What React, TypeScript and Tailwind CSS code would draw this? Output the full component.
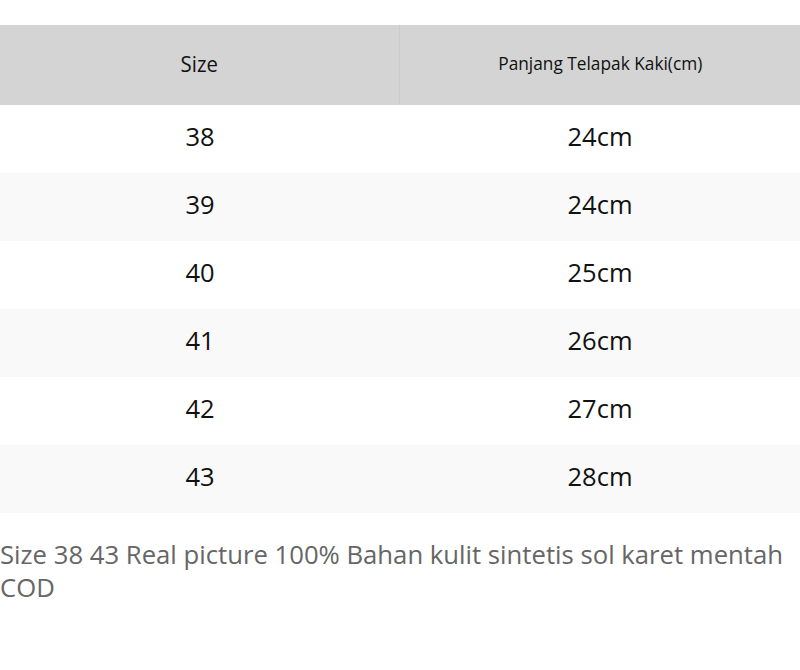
import React from "react"

const rows = [
  ["38", "24cm"],
  ["39", "24cm"],
  ["40", "25cm"],
  ["41", "26cm"],
  ["42", "27cm"],
  ["43", "28cm"],
]

export default function App() {
  return (
    <div className="w-[800px] h-[670px] bg-white pt-[25px] font-['Open_Sans',sans-serif]">
      {/* tabel ukuran */}
      <div className="w-full">
        <div className="grid grid-cols-2 h-[80px] bg-[#d4d4d4] text-[#111]">
          <div className="flex items-center justify-center border-r border-[#cbcbcb]">
            <span className="text-[21px] inline-block scale-x-[0.97]">Size</span>
          </div>
          <div className="flex items-center justify-center pb-[3px]">
            <span className="text-[18px] inline-block scale-x-[0.96]">Panjang Telapak Kaki(cm)</span>
          </div>
        </div>
        {rows.map(([size, len], i) => (
          <div
            key={size}
            className={`grid grid-cols-2 h-[68px] text-[25.5px] text-[#111] ${i % 2 === 1 ? "bg-[#f9f9f9]" : "bg-white"}`}
          >
            <div className="flex items-center justify-center pb-[5px]">{size}</div>
            <div className="flex items-center justify-center pb-[5px]">{len}</div>
          </div>
        ))}
      </div>

      {/* deskripsi */}
      <p className="mt-[25px] text-[25.7px] leading-[33px] text-[#666]">
        Size 38 43 Real picture 100% Bahan kulit sintetis sol karet mentah COD
      </p>
    </div>
  )
}
